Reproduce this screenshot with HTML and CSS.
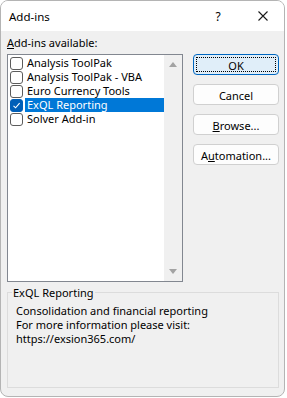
FILE: index.html
```html
<!DOCTYPE html>
<html lang="en">
<head>
    <meta charset="UTF-8">
    <meta name="viewport" content="width=device-width, initial-scale=1.0">
    <title>Add-ins</title>
    <link rel="stylesheet" href="styles.css">
</head>
<body>

    <div class="dialog">
        <div class="titlebar">
            <span class="title">Add-ins</span>
            <span class="help">?</span>
            <svg class="close" width="10" height="10" viewBox="0 0 10 10">
                <path d="M0.5 0.5 L9.5 9.5 M9.5 0.5 L0.5 9.5" stroke="#1a1a1a" stroke-width="1.1" fill="none"/>
            </svg>
        </div>

        <div class="content">
            <div class="main">
                <div class="list-label"><u>A</u>dd-ins available:</div>

                <div class="listbox">
                    <ul class="items">
                        <li class="item"><span class="check"></span><span class="name">Analysis ToolPak</span></li>
                        <li class="item"><span class="check"></span><span class="name">Analysis ToolPak - VBA</span></li>
                        <li class="item"><span class="check"></span><span class="name">Euro Currency Tools</span></li>
                        <li class="item selected">
                            <span class="check checked">
                                <svg width="11" height="11" viewBox="0 0 11 11"><path d="M2.5 5.8 L4.6 7.8 L8.6 3.2" stroke="#fff" stroke-width="1.1" fill="none"/></svg>
                            </span>
                            <span class="name">ExQL Reporting</span>
                        </li>
                        <li class="item"><span class="check"></span><span class="name">Solver Add-in</span></li>
                    </ul>
                    <div class="scrollbar">
                        <span class="arrow up"></span>
                        <span class="arrow down"></span>
                    </div>
                </div>

                <div class="buttons">
                    <button class="btn default"><span>OK</span></button>
                    <button class="btn"><span>Cancel</span></button>
                    <button class="btn"><span><u>B</u>rowse...</span></button>
                    <button class="btn"><span>A<u>u</u>tomation...</span></button>
                </div>
            </div>

            <fieldset class="group">
                <legend>ExQL Reporting</legend>
                <div class="desc">
                    <div class="line">Consolidation and financial reporting</div>
                    <div class="line">For more information please visit:</div>
                    <div class="line">https://exsion365.com/</div>
                </div>
            </fieldset>
        </div>
    </div>

</body>
</html>
```

FILE: styles.css
```css
* { margin: 0; padding: 0; box-sizing: border-box; }
body { font-family: "Noto Sans", sans-serif; font-size: 11px; color: #000; background: #fff; }

.dialog {
    width: 285px;
    height: 397px;
    border: 1px solid #b4b4b4;
    border-radius: 8px;
    overflow: hidden;
    background: #f0f0f0;
    display: flex;
    flex-direction: column;
}

.titlebar { height: 30px; background: #fff; display: flex; align-items: center; padding: 0 11px 0 8px; }
.title { flex: 1; font-size: 11.5px; }
.help { width: 20px; text-align: center; font-size: 12px; margin-right: 25px; }
.close { display: block; margin: 0 5px; }

.content { flex: 1; display: flex; flex-direction: column; }

.main {
    display: grid;
    grid-template-columns: 176px 86px;
    column-gap: 10px;
    padding: 4px 5px 0 6px;
}
.list-label { grid-column: 1 / 3; line-height: 15px; margin-bottom: 4px; }

.listbox { height: 228px; border: 1px solid #828790; background: #fff; display: flex; }
.items { flex: 1; list-style: none; padding-top: 1px; }
.item { display: flex; align-items: center; height: 14px; line-height: 14px; }
.check {
    width: 13px; height: 13px;
    margin: 0 2px 0 2px;
    border: 1px solid #5c5c5c;
    border-radius: 3px;
    background: #fff;
    display: flex; align-items: center; justify-content: center;
}
.check.checked { background: #005fb8; border-color: #005fb8; }
.check svg { display: block; }
.name { flex: 1; height: 14px; padding-left: 2px; white-space: nowrap; }
.item.selected .name { background: #0078d7; color: #fff; }

.scrollbar {
    width: 18px;
    background: #f0f0f0;
    display: flex; flex-direction: column; align-items: center; justify-content: space-between;
    padding: 7px 0;
}
.arrow { width: 0; height: 0; border-left: 4px solid transparent; border-right: 4px solid transparent; }
.arrow.up { border-bottom: 5px solid #a3a3a3; }
.arrow.down { border-top: 5px solid #a3a3a3; }

.buttons { display: flex; flex-direction: column; gap: 9px; }
.btn {
    height: 21px;
    border: 1px solid #d0d0d0;
    border-radius: 4px;
    background: #fdfdfd;
    font: inherit;
    color: #000;
    padding: 2px;
}
.btn span { display: block; height: 100%; line-height: 15px; border: 1px solid transparent; }
.btn.default { border-color: #0067c0; background: #e0eef9; }
.btn.default span { border: 1px dotted #000; }

.group {
    flex: 1;
    margin: 3px 5px 8px 6px;
    border: 1px solid #dcdcdc;
    padding: 0 4px;
}
.group legend { padding: 0 1px; line-height: 15px; }
.desc { margin: 4px 0 0 4px; }
.line { height: 14px; line-height: 14px; white-space: nowrap; }
```
